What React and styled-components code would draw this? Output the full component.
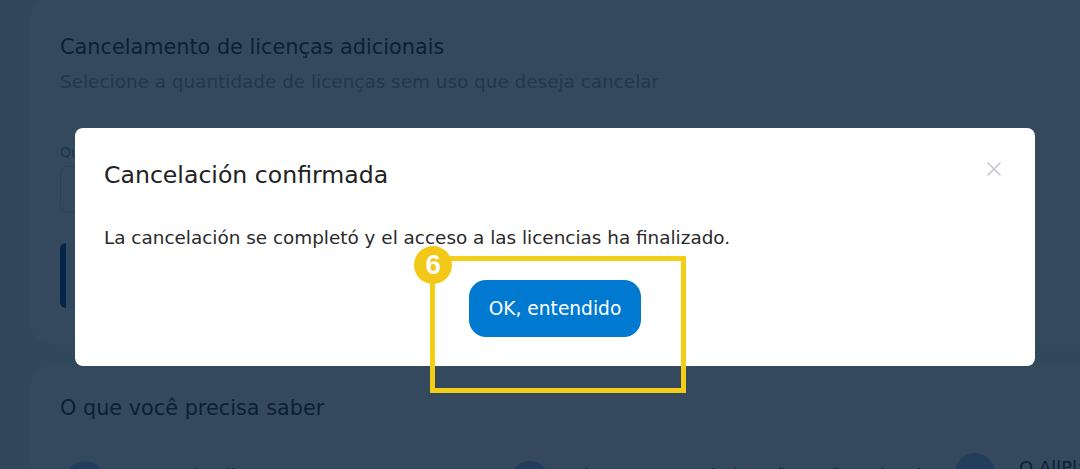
import React from "react";
import styled, { createGlobalStyle } from "styled-components";

const GlobalStyle = createGlobalStyle`
  html, body {
    margin: 0;
    padding: 0;
    overflow: hidden;
    background: #f0f2f5;
  }
  body {
    font-family: "DejaVu Sans", "Open Sans", sans-serif;
    color: #333;
  }
`;

const Page = styled.main`
  width: 1120px;
  padding: 0 0 0 30px;
  display: flex;
  flex-direction: column;
  gap: 20px;
  margin-top: -4px;
`;

const Card = styled.section`
  background: #ffffff;
  border-radius: 24px;
  padding: ${({ $pad }) => $pad || "38px 30px 30px"};
  height: ${({ $h }) => $h || "auto"};
  box-sizing: border-box;
`;

const CardTitle = styled.h2`
  margin: 0;
  font-size: 20.8px;
  font-weight: 400;
  color: #333;
  line-height: 26px;
`;

const CardSub = styled.p`
  margin: 10px 0 0;
  font-size: 18.4px;
  color: #9aa3ad;
  line-height: 24px;
`;

const Label = styled.div`
  margin-top: 50px;
  font-size: 14px;
  color: #8a94a0;
`;

const Input = styled.div`
  margin-top: 6px;
  width: 320px;
  height: 45px;
  border: 1px solid #cfd5dc;
  border-radius: 8px;
`;

const Notice = styled.div`
  margin-top: 30px;
  width: 600px;
  height: 65px;
  border-left: 6px solid #0a4a8e;
  border-radius: 6px;
  background: #eef4fb;
`;

const InfoRow = styled.div`
  display: grid;
  grid-template-columns: repeat(3, 445px);
  margin-top: 40px;
  padding-left: 5px;
`;

const InfoItem = styled.div`
  display: flex;
  gap: 24px;
  align-items: flex-start;
  margin-top: ${({ $up }) => $up || "0"};
`;

const Dot = styled.div`
  width: 40px;
  height: 40px;
  border-radius: 50%;
  background: #a4c9f2;
  flex-shrink: 0;
`;

const InfoText = styled.div`
  font-size: 18px;
  color: #333;
  padding-top: 4px;
`;

const Overlay = styled.div`
  position: fixed;
  inset: 0;
  background: rgba(1, 28, 54, 0.8);
`;

const Modal = styled.div`
  position: fixed;
  top: 128px;
  left: 75px;
  width: 960px;
  height: 238px;
  box-sizing: border-box;
  background: #ffffff;
  border-radius: 8px;
  padding: 29px 29px 29px;
  display: flex;
  flex-direction: column;
`;

const ModalHeader = styled.div`
  display: flex;
  justify-content: space-between;
  align-items: flex-start;
`;

const ModalTitle = styled.h3`
  margin: 0;
  font-size: 23.6px;
  font-weight: 400;
  color: #222;
  line-height: 36px;
`;

const Close = styled.button`
  border: none;
  background: none;
  padding: 0;
  width: 24px;
  height: 24px;
  display: flex;
  align-items: center;
  justify-content: center;
  cursor: pointer;
`;

const ModalBody = styled.p`
  margin: 32px 0 0;
  font-size: 18.4px;
  color: #2a2a2a;
  line-height: 26px;
`;

const Actions = styled.div`
  display: flex;
  justify-content: center;
  margin-top: 29px;
`;

const PrimaryButton = styled.button`
  border: none;
  background: #0079d1;
  color: #ffffff;
  font-family: inherit;
  font-size: 18.6px;
  font-weight: 400;
  width: 172px;
  height: 57px;
  border-radius: 17px;
  cursor: pointer;
`;

const Highlight = styled.div`
  position: fixed;
  left: 430px;
  top: 256px;
  width: 256px;
  height: 137px;
  box-sizing: border-box;
  border: 5px solid #f2cf16;
`;

const Badge = styled.div`
  position: fixed;
  left: 414px;
  top: 246px;
  width: 38px;
  height: 38px;
  border-radius: 50%;
  background: #f2c919;
  color: #ffffff;
  font-family: "Liberation Sans", Arial, sans-serif;
  font-weight: 700;
  font-size: 28px;
  display: flex;
  align-items: center;
  justify-content: center;
`;

export default function App() {
  return (
    <>
      <GlobalStyle />
      <Page>
        <Card $h="349px">
          <CardTitle>Cancelamento de licenças adicionais</CardTitle>
          <CardSub>Selecione a quantidade de licenças sem uso que deseja cancelar</CardSub>
          <Label>Quantidade de licenças</Label>
          <Input />
          <Notice />
        </Card>
        <Card $pad="30px 30px 0">
          <CardTitle>O que você precisa saber</CardTitle>
          <InfoRow>
            <InfoItem>
              <Dot />
              <InfoText>Nome do cliente</InfoText>
            </InfoItem>
            <InfoItem>
              <Dot />
              <InfoText>Licenças canceladas não serão cobradas</InfoText>
            </InfoItem>
            <InfoItem $up="-8px">
              <Dot />
              <InfoText>O AllPlan</InfoText>
            </InfoItem>
          </InfoRow>
        </Card>
      </Page>
      <Overlay />
      <Modal role="dialog">
        <ModalHeader>
          <ModalTitle>Cancelación confirmada</ModalTitle>
          <Close aria-label="Cerrar">
            <svg width="16" height="16" viewBox="0 0 16 16">
              <path d="M2 2L14 14M14 2L2 14" stroke="#c3c6cf" strokeWidth="1.6" strokeLinecap="round" />
            </svg>
          </Close>
        </ModalHeader>
        <ModalBody>La cancelación se completó y el acceso a las licencias ha finalizado.</ModalBody>
        <Actions>
          <PrimaryButton>OK, entendido</PrimaryButton>
        </Actions>
      </Modal>
      <Highlight />
      <Badge>6</Badge>
    </>
  );
}
